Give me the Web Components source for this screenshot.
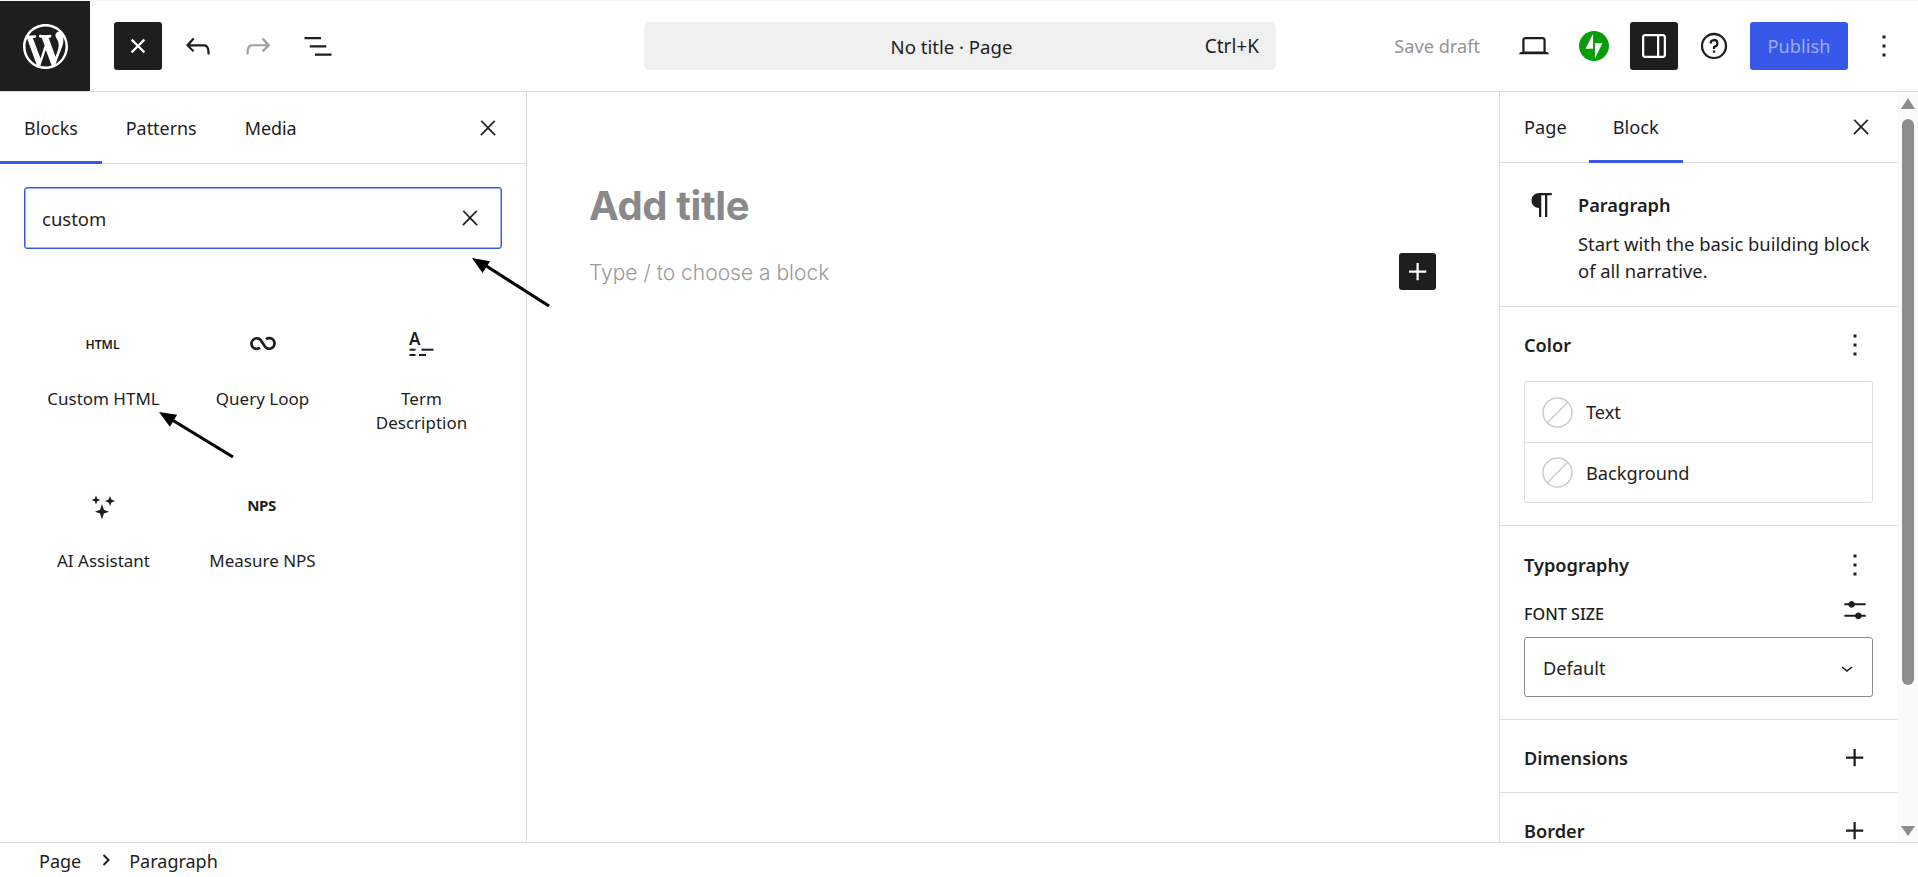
<!DOCTYPE html>
<html lang="en">
<head>
<meta charset="utf-8">
<title>No title - Page</title>
<style>
html,body{margin:0;height:100%;overflow:hidden;background:#fff}
body{font-family:"Noto Sans","Open Sans",sans-serif;font-size:18.2px;color:#1e1e1e}
</style>
</head>
<body>
<wp-editor></wp-editor>
<script>
const ICONS = {
    close: '<path stroke="currentColor" stroke-width=".35" d="M13 11.8l6.1-6.3-1-1-6.1 6.2-6.1-6.2-1 1 6.1 6.3-6.5 6.7 1 1 6.5-6.6 6.5 6.6 1-1z"/>',
    closeSmall: '<path d="M12 13.06l3.712 3.713 1.061-1.06L13.061 12l3.712-3.712-1.06-1.06L12 10.938 8.288 7.227l-1.061 1.06L10.939 12l-3.712 3.712 1.06 1.061L12 13.061z"/>',
    undo: '<path d="M18.3 11.7c-.6-.6-1.4-.9-2.3-.9H6.7l2.9-3.3-1.1-1-4.5 5L8.5 16l1-1-2.7-2.7H16c.5 0 .9.2 1.3.5 1 1 1 3.4 1 4.5v.3h1.5v-.2c0-1.5 0-4.3-1.5-5.7z"/>',
    redo: '<path d="M15.6 6.5l-1.1 1 2.9 3.3H8c-.9 0-1.7.3-2.3.9-1.4 1.5-1.4 4.2-1.4 5.6v.2h1.5v-.3c0-1.1 0-3.5 1-4.5.3-.3.7-.5 1.3-.5h9.2L14.5 15l1.1 1.1 4.6-4.6-4.6-5z"/>',
    list: '<path d="M3 6h11v1.5H3V6Zm3.5 5.5h11V13h-11v-1.5ZM21 17H10v1.5h11V17Z"/>',
    plus: '<path d="M11 12.5V17.5H12.5V12.5H17.5V11H12.5V6H11V11H6V12.5H11Z"/>',
    more: '<path d="M13 19h-2v-2h2v2zm0-6h-2v-2h2v2zm0-6h-2V5h2v2z"/>',
    laptop: '<path d="M20.5 16h-.7V8c0-1.1-.9-2-2-2H6.2c-1.1 0-2 .9-2 2v8h-.7c-.8 0-1.5.7-1.5 1.5h20c0-.8-.7-1.5-1.5-1.5zM5.7 8c0-.3.2-.5.5-.5h11.6c.3 0 .5.2.5.5v7.6H5.7V8z"/>',
    drawer: '<path d="M18 4H6c-1.1 0-2 .9-2 2v12c0 1.1.9 2 2 2h12c1.1 0 2-.9 2-2V6c0-1.1-.9-2-2-2zm-4 14.5H6c-.3 0-.5-.2-.5-.5V6c0-.3.2-.5.5-.5h8v13zm4.5-.5c0 .3-.2.5-.5.5h-2.5v-13H18c.3 0 .5.2.5.5v12z"/>',
    help: '<path d="M12 4.75a7.25 7.25 0 100 14.5 7.25 7.25 0 000-14.5zM3.25 12a8.75 8.75 0 1117.5 0 8.75 8.75 0 01-17.5 0zM12 8.75a1.5 1.5 0 01.167 2.99c-.465.052-.917.44-.917 1.01V14h1.5v-.845A3 3 0 109 10.25h1.5a1.5 1.5 0 011.5-1.5zM11.25 15v1.5h1.5V15h-1.5z"/>',
    paragraph: '<path d="m9.99609 14v-.2251l.00391.0001v6.225h1.5v-14.5h2.5v14.5h1.5v-14.5h3v-1.5h-8.50391c-2.76142 0-5 2.23858-5 5 0 2.7614 2.23858 5 5 5z"/>',
    sliders: '<path d="M14.5 13.8c-1.1 0-2.1.7-2.4 1.8H4V17h8.1c.3 1 1.3 1.8 2.4 1.8s2.1-.7 2.4-1.8H20v-1.5h-3.1c-.3-1-1.3-1.7-2.4-1.7zM11.9 7c-.3-1-1.3-1.8-2.4-1.8S7.4 6 7.1 7H4v1.5h3.1c.3 1 1.3 1.8 2.4 1.8s2.1-.7 2.4-1.8H20V7h-8.1z"/>',
    chevron: '<path d="M17.5 11.6L12 16l-5.5-4.4.9-1.2L12 14l4.5-3.6 1 1.2z"/>'
}

class WpIcon extends HTMLElement{
    connectedCallback(){
        const size = this.getAttribute('size') || 36
        this.attachShadow({mode:'open'}).innerHTML = `
        <style>
            :host{display:inline-flex;width:${size}px;height:${size}px;flex:none}
            svg{width:100%;height:100%;fill:currentColor;display:block}
        </style>
        <svg viewBox="0 0 24 24">${ICONS[this.getAttribute('name')]}</svg>`
    }
}

class WpIconButton extends HTMLElement{
    connectedCallback(){
        const size = this.getAttribute('icon-size') || 36
        this.attachShadow({mode:'open'}).innerHTML = `
        <style>
            :host{display:flex;align-items:center;justify-content:center;width:48px;height:48px;border-radius:3px;color:#1e1e1e;flex:none}
            :host([dark]){background:#1e1e1e;color:#fff}
            :host([muted]){color:#a0a0a0}
        </style>
        <wp-icon name="${this.getAttribute('name')}" size="${size}"></wp-icon>`
    }
}

class WpHeader extends HTMLElement{
    connectedCallback(){
        this.attachShadow({mode:'open'}).innerHTML = `
        <style>
            :host{display:grid;grid-template-columns:644px 632px 1fr;align-items:center;height:90px;background:#fff;border-top:1px solid #f8f6fb;border-bottom:1px solid #ddd;flex:none}
            .left,.right{display:flex;align-items:center;gap:12px}
            .right{justify-content:flex-end;padding-right:10px}
            .logo{width:90px;height:90px;background:#1e1e1e;color:#fff;display:flex;align-items:center;justify-content:center;margin-right:12px}
            .logo svg{width:45px;height:45px;fill:currentColor}
            .command{height:48px;background:#f0f0f0;border-radius:6px;display:flex;align-items:center;justify-content:center;position:relative;font-size:18.600px}
            .command .title{margin-right:17px}
            .command kbd{font:inherit;font-size:19px;position:absolute;right:17px}
            .save{color:#949494;padding:0 18px 0 12px}
            .publish{width:98px;height:48px;border-radius:3px;background:#3858e9;color:#9cadf4;display:flex;align-items:center;justify-content:center}
            .jetpack{width:48px;height:48px;display:flex;align-items:center;justify-content:center}
            .jetpack svg{width:30px;height:30px}
        </style>
        <div class="left">
            <div class="logo"><svg viewBox="0 0 20 20"><path d="M20 10c0-5.51-4.49-10-10-10C4.48 0 0 4.49 0 10c0 5.52 4.48 10 10 10 5.510 0 10-4.48 10-10zM7.780 15.370L4.370 6.220c.55-.02 1.170-.08 1.170-.08.5-.06.44-1.130-.06-1.110 0 0-1.450.11-2.370.11-.18 0-.37 0-.58-.01C4.120 2.690 6.870 1.110 10 1.110c2.330 0 4.450.87 6.050 2.340-.68-.11-1.650.39-1.650 1.580 0 .74.45 1.360.9 2.100.35.61.55 1.360.55 2.460 0 1.490-1.400 5-1.400 5l-3.030-8.370c.54-.02.82-.17.82-.17.5-.05.44-1.250-.06-1.220 0 0-1.440.12-2.380.12-.87 0-2.330-.12-2.330-.12-.5-.03-.56 1.200-.06 1.220l.92.08 1.260 3.410zM17.410 10c.24-.64.74-1.870.43-4.250.7 1.290 1.050 2.710 1.050 4.250 0 3.290-1.730 6.240-4.400 7.780.97-2.590 1.940-5.200 2.920-7.780zM6.100 18.090C3.120 16.650 1.110 13.530 1.110 10c0-1.300.23-2.480.72-3.590C3.250 10.300 4.670 14.200 6.100 18.090zm4.030-6.630l2.580 6.980c-.86.29-1.760.45-2.710.45-.79 0-1.570-.11-2.290-.33.81-2.380 1.620-4.740 2.420-7.100z"/></svg></div>
            <wp-icon-button name="closeSmall" dark></wp-icon-button>
            <wp-icon-button name="undo"></wp-icon-button>
            <wp-icon-button name="redo" muted></wp-icon-button>
            <wp-icon-button name="list"></wp-icon-button>
        </div>
        <div class="command"><span class="title">No title · Page</span><kbd>Ctrl+K</kbd></div>
        <div class="right">
            <span class="save">Save draft</span>
            <wp-icon-button name="laptop"></wp-icon-button>
            <div class="jetpack"><svg viewBox="0 0 32 32"><path fill="#069e08" d="M16 0C7.200 0 0 7.200 0 16s7.200 16 16 16 16-7.200 16-16S24.800 0 16 0z"/><path fill="#fff" d="M15 19H7l8-16v16zM17 29V13h8l-8 16z"/></svg></div>
            <wp-icon-button name="drawer" dark></wp-icon-button>
            <wp-icon-button name="help"></wp-icon-button>
            <div class="publish">Publish</div>
            <wp-icon-button name="more"></wp-icon-button>
        </div>`
    }
}

class WpTab extends HTMLElement{
    connectedCallback(){
        this.attachShadow({mode:'open'}).innerHTML = `
        <style>
            :host{display:flex;align-items:center;height:100%;padding:0 24px;box-sizing:border-box;position:relative;color:#1e1e1e}
            :host([active])::after{content:"";position:absolute;left:0;right:0;bottom:-1px;height:3px;background:#3858e9}
        </style>
        <slot></slot>`
    }
}

class WpTabBar extends HTMLElement{
    connectedCallback(){
        this.attachShadow({mode:'open'}).innerHTML = `
        <style>
            :host{display:flex;align-items:center;height:var(--bar,70px);border-bottom:1px solid #ddd;flex:none}
            .tabs{display:flex;height:100%;flex:1}
            wp-icon{margin-right:var(--close-gap,26px)}
        </style>
        <div class="tabs"><slot></slot></div>
        <wp-icon name="close" size="24"></wp-icon>`
    }
}

class WpTile extends HTMLElement{
    connectedCallback(){
        this.attachShadow({mode:'open'}).innerHTML = `
        <style>
            :host{display:flex;flex-direction:column;align-items:center;height:162px;text-align:center;font-size:17px;line-height:24px}
            .icon{height:36px;margin-bottom:24px;display:flex;align-items:center;justify-content:center}
        </style>
        <div class="icon"><slot name="icon"></slot></div>
        <div><slot></slot></div>`
    }
}

class WpInserter extends HTMLElement{
    connectedCallback(){
        this.attachShadow({mode:'open'}).innerHTML = `
        <style>
            :host{display:flex;flex-direction:column;border-right:1px solid #ddd;overflow:hidden;--bar:71px}
            wp-tab-bar{font-size:17.900px}
            .search{margin:23px 24px 0;height:62px;box-sizing:border-box;border:1px solid #3858e9;box-shadow:inset 0 0 0 .5px #3858e9;border-radius:3px;display:flex;align-items:center;justify-content:space-between;padding:0 19px 0 17px;font-size:18.500px}
            .grid{display:grid;grid-template-columns:repeat(3,159px);padding:78px 24px 0}
            .word{font-weight:600;color:#1e1e1e;margin-right:2px}
            .html{font-size:12.200px}
            .nps{font-size:15px;font-weight:700;letter-spacing:-.4px;position:relative;top:-2px}
            svg{width:36px;height:36px;display:block;fill:#1e1e1e}
            text{font-family:"Noto Sans",sans-serif;font-size:17px;font-weight:600}
            line{stroke:#1e1e1e;stroke-width:2}
            .loop{fill:none;stroke:#1e1e1e;stroke-width:2.700}
        </style>
        <wp-tab-bar>
            <wp-tab active>Blocks</wp-tab>
            <wp-tab>Patterns</wp-tab>
            <wp-tab>Media</wp-tab>
        </wp-tab-bar>
        <div class="search"><span>custom</span><wp-icon name="close" size="24"></wp-icon></div>
        <div class="grid">
            <wp-tile><span slot="icon" class="word html">HTML</span>Custom HTML</wp-tile>
            <wp-tile><svg slot="icon" viewBox="0 0 36 36"><path class="loop" d="M15 20.800A5.300 5.300 0 1 1 16.700 14.600L19.300 18.400A5.300 5.300 0 1 0 21 12.200"/></svg>Query Loop</wp-tile>
            <wp-tile><svg slot="icon" viewBox="0 0 36 36"><text x="5" y="18">A</text><line x1="5.500" y1="22.700" x2="11.500" y2="22.700"/><line x1="17.500" y1="22.700" x2="29.500" y2="22.700"/><line x1="5.500" y1="28" x2="11.500" y2="28"/><line x1="15" y1="28" x2="22" y2="28"/></svg>Term<br>Description</wp-tile>
            <wp-tile><svg slot="icon" viewBox="0 0 36 36"><path d="M16 15l1.900 5.800 5.100 1.900-5.100 1.900-1.900 5.800-1.900-5.800-5.100-1.900 5.100-1.900ZM10 6.500l1.300 3.200 3.200 1.300-3.200 1.300-1.300 3.200-1.300-3.200-3.200-1.300 3.200-1.300ZM24 7l1.400 3.600 3.600 1.400-3.600 1.400-1.400 3.600-1.400-3.600-3.600-1.400 3.600-1.400Z"/></svg>AI Assistant</wp-tile>
            <wp-tile><span slot="icon" class="word nps">NPS</span>Measure NPS</wp-tile>
        </div>`
    }
}

class WpCanvas extends HTMLElement{
    connectedCallback(){
        this.attachShadow({mode:'open'}).innerHTML = `
        <style>
            :host{display:block;padding:90px 63px 0 62px}
            h1{margin:0 0 23px;font:700 40px/48px Inter,sans-serif;letter-spacing:-.4px;color:#898989}
            .row{display:flex;align-items:center;justify-content:space-between;height:37px}
            .hint{font:300 21px Inter,sans-serif;color:#9a9a9a;padding-top:2px}
            .add{width:37px;height:37px;border-radius:3px;background:#1e1e1e;color:#fff;display:flex;align-items:center;justify-content:center}
        </style>
        <h1>Add title</h1>
        <div class="row"><span class="hint">Type / to choose a block</span><div class="add"><wp-icon name="plus"></wp-icon></div></div>`
    }
}

class WpPanel extends HTMLElement{
    connectedCallback(){
        const action = this.getAttribute('action')
        this.attachShadow({mode:'open'}).innerHTML = `
        <style>
            :host{display:block;padding:var(--pad-top,24px) 24px var(--pad-bottom,22px);border-bottom:1px solid #ddd;flex:none}
            .head{display:flex;align-items:center;justify-content:space-between;height:28px}
            h2{margin:0;font-size:18.200px;font-weight:600}
        </style>
        <div class="head"><h2>${this.getAttribute('heading')}</h2><wp-icon name="${action}"></wp-icon></div>
        <slot></slot>`
    }
}

class WpColorRow extends HTMLElement{
    connectedCallback(){
        this.attachShadow({mode:'open'}).innerHTML = `
        <style>
            :host{display:flex;align-items:center;gap:13px;height:60px;padding:0 17px;box-sizing:border-box}
            svg{width:31px;height:31px;flex:none}
            circle,line{fill:none;stroke:#ccc;stroke-width:1.500}
        </style>
        <svg viewBox="0 0 31 31"><circle cx="15.500" cy="15.500" r="14.500"/><line x1="5" y1="26" x2="26" y2="5"/></svg>
        <slot></slot>`
    }
}

class WpSettings extends HTMLElement{
    connectedCallback(){
        this.attachShadow({mode:'open'}).innerHTML = `
        <style>
            :host{display:flex;border-left:1px solid #ddd;overflow:hidden}
            .content{flex:1;min-width:0;display:flex;flex-direction:column;--close-gap:24px}
            .card{display:flex;gap:18px;height:144px;box-sizing:border-box;padding:28px 24px 0;border-bottom:1px solid #ddd;flex:none}
            .card wp-icon{margin-top:-4px}
            .card h3{margin:0 0 11px;font-size:18.200px;line-height:28px;font-weight:600}
            .card p{margin:0;font-size:18.400px;line-height:27px}
            .tabs wp-tab:first-child{padding-right:22px}
            .rows{margin-top:22px;border:1px solid #ddd;border-radius:3px}
            .rows wp-color-row+wp-color-row{border-top:1px solid #ddd}
            .label{display:flex;align-items:center;justify-content:space-between;height:36px;margin-top:17px;font-size:16.200px;font-weight:500;text-transform:uppercase}
            .label wp-icon{margin:-9px 2px 0 0}
            .select{height:60px;margin-top:5px;box-sizing:border-box;border:1px solid #8c8c8c;border-radius:3px;display:flex;align-items:center;justify-content:space-between;padding:2px 13px 0 18px}
        </style>
        <div class="content">
            <wp-tab-bar class="tabs"><wp-tab>Page</wp-tab><wp-tab active>Block</wp-tab></wp-tab-bar>
            <div class="card">
                <wp-icon name="paragraph"></wp-icon>
                <div><h3>Paragraph</h3><p>Start with the basic building block of all narrative.</p></div>
            </div>
            <wp-panel heading="Color" action="more">
                <div class="rows">
                    <wp-color-row>Text</wp-color-row>
                    <wp-color-row>Background</wp-color-row>
                </div>
            </wp-panel>
            <wp-panel heading="Typography" action="more" style="--pad-top:25px;--pad-bottom:22px">
                <div class="label">Font size<wp-icon name="sliders" size="32"></wp-icon></div>
                <div class="select">Default<wp-icon name="chevron" size="24"></wp-icon></div>
            </wp-panel>
            <wp-panel heading="Dimensions" action="plus" style="--pad-bottom:20px"></wp-panel>
            <wp-panel heading="Border" action="plus" style="--pad-bottom:20px"></wp-panel>
        </div>
        <wp-scroll></wp-scroll>`
    }
}

class WpScroll extends HTMLElement{
    connectedCallback(){
        this.attachShadow({mode:'open'}).innerHTML = `
        <style>
            :host{display:flex;flex-direction:column;align-items:center;width:21px;flex:none;background:#fafafa;padding:6px 0;box-sizing:border-box}
            .up,.down{width:0;height:0;border-left:7px solid transparent;border-right:7px solid transparent}
            .up{border-bottom:11px solid #8c8c8c}
            .down{border-top:10px solid #8c8c8c;margin-top:auto}
            .thumb{width:12px;height:566px;margin:10px 0 0;border-radius:6px;background:#8d8d8d}
        </style>
        <div class="up"></div><div class="thumb"></div><div class="down"></div>`
    }
}

class WpBreadcrumbs extends HTMLElement{
    connectedCallback(){
        this.attachShadow({mode:'open'}).innerHTML = `
        <style>
            :host{display:flex;align-items:center;height:34px;box-sizing:content-box;border-top:1px solid #ddd;padding-left:39px;flex:none;font-size:18px;background:#fff;position:relative}
            span{position:relative;top:1px}
            svg{width:8px;height:12px;margin:0 19px 0 21px;fill:none;stroke:#1e1e1e;stroke-width:2}
        </style>
        <span>Page</span><svg viewBox="0 0 8 12"><path d="M1.500 1l5 5-5 5"/></svg><span>Paragraph</span>`
    }
}

// the two hand drawn arrows sit on top of the screenshot
class WpAnnotations extends HTMLElement{
    connectedCallback(){
        this.attachShadow({mode:'open'}).innerHTML = `
        <style>
            :host{position:absolute;inset:0;pointer-events:none}
            svg{width:100%;height:100%;display:block}
            line{stroke:#000;stroke-width:3.200}
        </style>
        <svg viewBox="0 0 1918 877">
            <line x1="549" y1="306" x2="484" y2="264.500"/>
            <polygon points="472,258 490.100,261.300 482.500,273.100"/>
            <line x1="233" y1="457" x2="169" y2="418"/>
            <polygon points="159,412 177.100,414.800 169.900,426.800"/>
        </svg>`
    }
}

class WpEditor extends HTMLElement{
    connectedCallback(){
        this.attachShadow({mode:'open'}).innerHTML = `
        <style>
            :host{display:flex;flex-direction:column;height:877px;position:relative}
            .main{flex:1;min-height:0;display:grid;grid-template-columns:527px 1fr 419px}
        </style>
        <wp-header></wp-header>
        <div class="main">
            <wp-inserter></wp-inserter>
            <wp-canvas></wp-canvas>
            <wp-settings></wp-settings>
        </div>
        <wp-breadcrumbs></wp-breadcrumbs>
        <wp-annotations></wp-annotations>`
    }
}

customElements.define('wp-icon',WpIcon)
customElements.define('wp-icon-button',WpIconButton)
customElements.define('wp-tab',WpTab)
customElements.define('wp-tab-bar',WpTabBar)
customElements.define('wp-tile',WpTile)
customElements.define('wp-panel',WpPanel)
customElements.define('wp-color-row',WpColorRow)
customElements.define('wp-scroll',WpScroll)
customElements.define('wp-header',WpHeader)
customElements.define('wp-inserter',WpInserter)
customElements.define('wp-canvas',WpCanvas)
customElements.define('wp-settings',WpSettings)
customElements.define('wp-breadcrumbs',WpBreadcrumbs)
customElements.define('wp-annotations',WpAnnotations)
customElements.define('wp-editor',WpEditor)
</script>
</body>
</html>
